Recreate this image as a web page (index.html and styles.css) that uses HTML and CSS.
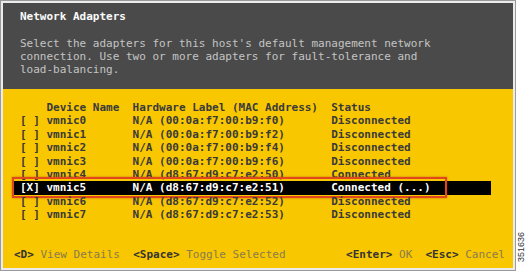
FILE: index.html
```html
<!DOCTYPE html>
<html lang="en">
	<head>
		<meta charset="UTF-8" />
		<meta name="viewport" content="width=device-width, initial-scale=1.0" />
		<title>Network Adapters</title>
		<link rel="stylesheet" href="styles.css">
	</head>
	<body>
		<div class="page">
			<div class="screen">
				<div class="dialog-head">
					<div class="title">Network Adapters</div>
					<div class="desc">
						<div>Select the adapters for this host's default management network</div>
						<div>connection. Use two or more adapters for fault-tolerance and</div>
						<div>load-balancing.</div>
					</div>
				</div>

				<div class="dialog-body">
					<div class="adapter-list">
						<div class="row header">
							<span class="col-check"></span>
							<span class="col-name">Device Name</span>
							<span class="col-mac">Hardware Label (MAC Address)</span>
							<span class="col-status">Status</span>
						</div>
						<div class="row">
							<span class="col-check">[ ]</span>
							<span class="col-name">vmnic0</span>
							<span class="col-mac">N/A (00:0a:f7:00:b9:f0)</span>
							<span class="col-status">Disconnected</span>
						</div>
						<div class="row">
							<span class="col-check">[ ]</span>
							<span class="col-name">vmnic1</span>
							<span class="col-mac">N/A (00:0a:f7:00:b9:f2)</span>
							<span class="col-status">Disconnected</span>
						</div>
						<div class="row">
							<span class="col-check">[ ]</span>
							<span class="col-name">vmnic2</span>
							<span class="col-mac">N/A (00:0a:f7:00:b9:f4)</span>
							<span class="col-status">Disconnected</span>
						</div>
						<div class="row">
							<span class="col-check">[ ]</span>
							<span class="col-name">vmnic3</span>
							<span class="col-mac">N/A (00:0a:f7:00:b9:f6)</span>
							<span class="col-status">Disconnected</span>
						</div>
						<div class="row">
							<span class="col-check">[ ]</span>
							<span class="col-name">vmnic4</span>
							<span class="col-mac">N/A (d8:67:d9:c7:e2:50)</span>
							<span class="col-status">Connected</span>
						</div>
						<div class="row selected">
							<span class="col-check">[X]</span>
							<span class="col-name">vmnic5</span>
							<span class="col-mac">N/A (d8:67:d9:c7:e2:51)</span>
							<span class="col-status">Connected (...)</span>
							<span class="highlight"></span>
						</div>
						<div class="row">
							<span class="col-check">[ ]</span>
							<span class="col-name">vmnic6</span>
							<span class="col-mac">N/A (d8:67:d9:c7:e2:52)</span>
							<span class="col-status">Disconnected</span>
						</div>
						<div class="row">
							<span class="col-check">[ ]</span>
							<span class="col-name">vmnic7</span>
							<span class="col-mac">N/A (d8:67:d9:c7:e2:53)</span>
							<span class="col-status">Disconnected</span>
						</div>
					</div>

					<div class="keys">
						<div class="key-group"><span class="key">&lt;D&gt;</span> <span class="action">View Details</span><span class="key gap">&lt;Space&gt;</span> <span class="action">Toggle Selected</span></div>
						<div class="key-group"><span class="key">&lt;Enter&gt;</span> <span class="action">OK</span><span class="key gap">&lt;Esc&gt;</span> <span class="action">Cancel</span></div>
					</div>
				</div>
			</div>

			<div class="figure-id">
				<span>351636</span>
			</div>
		</div>
	</body>
</html>
```

FILE: styles.css
```css
body {
	margin: 0;
	background-color: #fff;
	font-family: "DejaVu Sans Mono", "Liberation Mono", monospace;
	font-size: 11px;
}

.page {
	display: flex;
	width: 526px;
	height: 272px;
}

.screen {
	display: flex;
	flex-direction: column;
	flex-shrink: 0;
	width: 510px;
	height: 265px;
	border: 2px solid #ececec;
	outline: 1px solid #9a9a9a;
	margin: 1px 0 0 1px;
}

/* dark header part */
.dialog-head {
	height: 86px;
	box-sizing: border-box;
	background-color: #4a4a4a;
	padding: 7px 0 0 17px;
	line-height: 13px;
}

.title {
	color: #fafafa;
	font-weight: bold;
}

.desc {
	margin-top: 14px;
	color: #c4c4c4;
}

/* yellow body part */
.dialog-body {
	flex: 1;
	display: flex;
	flex-direction: column;
	background-color: #f9c700;
	color: #3a3a3a;
	font-weight: bold;
	padding: 12px 0 7px 0;
}

.adapter-list {
	margin-left: 11px;
	width: 477px;
}

.row {
	position: relative;
	display: flex;
	line-height: 13.4px;
	padding-left: 6px;
	white-space: pre;
}

.col-check {
	width: 4ch;
}

.col-name {
	width: 13ch;
}

.col-mac {
	width: 30ch;
}

.row.selected {
	background-color: #000;
	color: #fff;
}

.highlight {
	position: absolute;
	top: -4px;
	left: -2px;
	width: 431px;
	height: 17px;
	border: 2px solid #e2461e;
	box-shadow: 0 0 2px rgba(160, 60, 20, 0.6);
}

.keys {
	margin-top: auto;
	display: flex;
	justify-content: space-between;
	padding: 0 8px 0 11px;
	line-height: 13.4px;
	white-space: nowrap;
}

.key {
	color: #333;
}

.key.gap {
	margin-left: 2ch;
}

.action {
	color: #887b4e;
	font-weight: normal;
}

.figure-id {
	flex: 1;
	display: flex;
	flex-direction: column;
	justify-content: flex-end;
	align-items: center;
	padding-bottom: 10px;
}

.figure-id span {
	writing-mode: vertical-rl;
	transform: rotate(180deg);
	font-family: "Liberation Sans", Arial, sans-serif;
	font-size: 9px;
	color: #333;
}
```
